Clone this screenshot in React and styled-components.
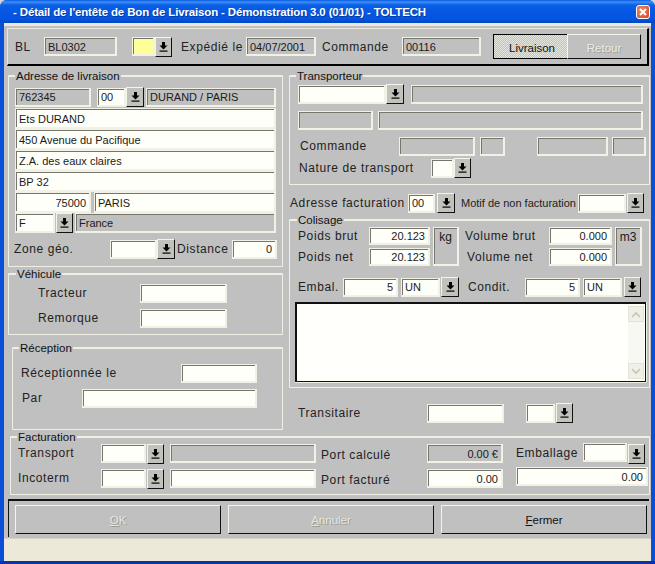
import React from 'react'
import styled, { createGlobalStyle, css } from 'styled-components'

const GlobalStyle = createGlobalStyle`
  html, body {
    margin: 0;
    padding: 0;
    background: #d4d4d4;
  }
  body {
    font-family: "Liberation Sans", Arial, sans-serif;
    color: #111;
  }
  * { box-sizing: border-box; }
`

const Win = styled.div`
  width: 655px;
  height: 564px;
  display: flex;
  flex-direction: column;
  overflow: hidden;
  border-radius: 7px 7px 0 0;
  background: #0a4fd8;
  border-bottom: 3px solid #0733a8;
`

const TitleBar = styled.div`
  height: 23px;
  flex: none;
  display: flex;
  align-items: center;
  justify-content: space-between;
  padding: 0 5px 0 13px;
  background: linear-gradient(180deg, #0a5ae6 0, #3d8ff2 2px, #0a5fe8 5px, #0355e2 14px, #0355e2 19px, #0246c4 23px);
  color: #fff;
  font-size: 11.5px;
  font-weight: 700;
  letter-spacing: -0.15px;
  text-shadow: 1px 1px 0 #0a3a9a;
  white-space: nowrap;
`

const CloseBtn = styled.div`
  width: 14px;
  height: 14px;
  border: 1px solid #fff;
  border-radius: 3px;
  background: radial-gradient(circle at 35% 35%, #ee8a68, #d8431f);
  display: flex;
  align-items: center;
  justify-content: center;
`

const Frame = styled.div`
  flex: 1;
  display: flex;
  flex-direction: column;
  margin: 0 4px 0 4px;
  border-top: 3px solid #ece9d8;
  background: #c0c0c0;
`

const TopPanel = styled.div`
  height: 38px;
  margin: 2px 0 0 3px;
  width: 642px;
  padding-left: 7px;
  display: flex;
  align-items: center;
  border-top: 1px solid #e8e8dc;
  border-left: 1px solid #e8e8dc;
  border-right: 2px solid #000;
  border-bottom: 2px solid #000;
`

const Middle = styled.div`
  display: flex;
  height: 361px;
  margin-top: 3px;
`

const LeftCol = styled.div`
  width: 281px;
  flex: none;
  display: flex;
  flex-direction: column;
  margin-left: 4px;
`

const RightCol = styled.div`
  width: 361px;
  flex: none;
  display: flex;
  flex-direction: column;
`

const Group = styled.fieldset`
  margin: ${p => p.$mt || 0}px 0 0 ${p => p.$ml || 0}px;
  padding: ${p => p.$pad || '0 0 0 6px'};
  width: ${p => p.$w}px;
  height: ${p => p.$h}px;
  flex: none;
  min-width: 0;
  border: 1px solid #efefe4;
  border-top-width: 2px;
  border-radius: 1px;
  display: block;
`

const Legend = styled.legend`
  margin-left: ${p => p.$ml || 0}px;
  padding: 0 1px;
  font-size: 11.5px;
  line-height: 14px;
  height: 14px;
  color: #111;
`

const Row = styled.div`
  display: flex;
  align-items: ${p => p.$top ? 'flex-start' : 'center'};
  height: ${p => p.$h || 20}px;
  margin-top: ${p => p.$mt || 0}px;
  margin-left: ${p => p.$ml || 0}px;
`

const Label = styled.div`
  flex: none;
  width: ${p => p.$w}px;
  margin-left: ${p => p.$ml || 0}px;
  margin-top: ${p => p.$mt || 0}px;
  font-size: ${p => p.$small ? 11 : 12}px;
  letter-spacing: ${p => p.$small ? 0 : 0.6}px;
  white-space: nowrap;
  color: #222;
`

const tones = {
  grey: '#c0c0c0',
  white: '#fffffa',
  yellow: '#ffff99',
}

const Field = styled.div`
  flex: none;
  width: ${p => p.$w}px;
  height: ${p => p.$h || 19}px;
  margin-left: ${p => p.$ml || 0}px;
  margin-top: ${p => p.$mt || 0}px;
  padding: 1px 3px 0 3px;
  display: flex;
  align-items: center;
  justify-content: ${p => p.$right ? 'flex-end' : 'flex-start'};
  background: ${p => tones[p.$tone || 'grey']};
  border-style: solid;
  border-color: #f1f1e6;
  border-width: 1px 2px 2px 1px;
  box-shadow: inset 1px 1px 0 #76766a;
  font-size: 11px;
  white-space: nowrap;
  overflow: hidden;
  color: #1a1a1a;
`

const Unit = styled(Field)`
  height: 39px;
  align-items: flex-start;
  justify-content: center;
  padding-top: 2px;
  font-size: 12px;
`

const DropBtn = styled.div`
  flex: none;
  width: ${p => p.$w || 17}px;
  height: 20px;
  margin-left: ${p => p.$ml || 0}px;
  display: flex;
  align-items: center;
  justify-content: center;
  background: #c2c2bc;
  border-style: solid;
  border-width: 1px;
  border-color: #f4f4ea #111 #111 #f4f4ea;
`

const Stack = styled.div`
  display: flex;
  flex-direction: column;
  gap: 3px;
`

const Memo = styled.div`
  width: 351px;
  height: 80px;
  margin-top: 5px;
  display: flex;
  justify-content: flex-end;
  background: #fffffc;
  border: 2px solid #111;
  border-right-width: 1px;
  border-bottom-width: 1px;
  box-shadow: 0 1px 0 #efefe4, 1px 0 0 #efefe4;
`

const ScrollTrack = styled.div`
  width: 16px;
  margin: 2px 1px 2px 0;
  display: flex;
  flex-direction: column;
  justify-content: space-between;
  background: #f8f8f2;
`

const ScrollArrow = styled.div`
  height: 16px;
  display: flex;
  align-items: center;
  justify-content: center;
  background: #f0f0e6;
  border: 1px solid #e2e2d6;
`

const Segmented = styled.div`
  width: 148px;
  height: 25px;
  margin-left: 12px;
  display: flex;
`

const SegOn = styled.div`
  width: 74px;
  display: flex;
  align-items: center;
  justify-content: center;
  padding: 2px 0 0 3px;
  border: 1px solid #000;
  border-width: 1px 0 1px 1px;
  font-size: 11.5px;
  background: repeating-conic-gradient(#e6e6e0 0 25%, #c0c0c0 0 50%) 0 0 / 2px 2px;
`

const SegOff = styled.div`
  width: 74px;
  display: flex;
  align-items: center;
  justify-content: center;
  padding-top: 2px;
  border-style: solid;
  border-width: 1px;
  border-color: #f4f4ea #111 #111 #f4f4ea;
  font-size: 11.5px;
  color: #ecece4;
  text-shadow: 1px 1px 0 #a0a09a;
`

const BottomPanel = styled.div`
  width: 641px;
  height: 38px;
  margin: 4px 0 0 4px;
  padding: 4px 0 0 6px;
  display: flex;
  gap: 7px;
  border-top: 2px solid #111;
  border-left: 1px solid #111;
`

const disabledText = css`
  color: #e6e6de;
  text-shadow: 1px 1px 0 #9c9c96;
`

const CmdButton = styled.div`
  width: 206px;
  height: 29px;
  display: flex;
  align-items: center;
  justify-content: center;
  border-style: solid;
  border-width: 1px;
  border-color: #f4f4ea #111 #111 #f4f4ea;
  font-size: 11.5px;
  ${p => p.$disabled && disabledText}
`

const StatusBar = styled.div`
  flex: 1;
  margin-top: 1px;
  background: #ece9d8;
  border-top: 1px solid #d6d3c4;
`

const Arrow = () => (
  <svg width="9" height="10" viewBox="0 0 9 10">
    <path d="M3 0h3v3.5h2.5L4.5 7.5.5 3.5H3z" fill="#000" />
    <rect x="0.5" y="8.5" width="8" height="1.2" fill="#000" />
  </svg>
)

const Chevron = ({ up }) => (
  <svg width="10" height="7" viewBox="0 0 10 7">
    <path d={up ? 'M1 6l4-4 4 4' : 'M1 1l4 4 4-4'} fill="none" stroke="#c4c4ba" strokeWidth="1.6" />
  </svg>
)

export default function App() {
  return (
    <>
      <GlobalStyle />
      <Win>
        <TitleBar>
          <span>- Détail de l'entête de Bon de Livraison - Démonstration 3.0 (01/01) - TOLTECH</span>
          <CloseBtn>
            <svg width="8" height="8" viewBox="0 0 8 8">
              <path d="M1 1l6 6M7 1L1 7" stroke="#fff" strokeWidth="2" />
            </svg>
          </CloseBtn>
        </TitleBar>
        <Frame>
          <TopPanel>
            <Label $w={29}>BL</Label>
            <Field $w={73}>BL0302</Field>
            <Field $w={23} $ml={15} $tone="yellow" />
            <DropBtn><Arrow /></DropBtn>
            <Label $w={65} $ml={9}>Expédié le</Label>
            <Field $w={70}>04/07/2001</Field>
            <Label $w={80} $ml={6}>Commande</Label>
            <Field $w={79}>00116</Field>
            <Segmented>
              <SegOn>Livraison</SegOn>
              <SegOff>Retour</SegOff>
            </Segmented>
          </TopPanel>

          <Middle>
            <LeftCol>
              <Group $w={275} $h={198}>
                <Legend>Adresse de livraison</Legend>
                <Row $mt={4}>
                  <Field $w={76}>762345</Field>
                  <Field $w={29} $ml={6} $tone="white">00</Field>
                  <DropBtn $w={18}><Arrow /></DropBtn>
                  <Field $w={130} $ml={2}>DURAND / PARIS</Field>
                </Row>
                <Row $h={21} $mt={1}><Field $w={261} $h={21} $tone="white">Ets DURAND</Field></Row>
                <Row $h={21}><Field $w={261} $h={21} $tone="white">450 Avenue du Pacifique</Field></Row>
                <Row $h={21}><Field $w={261} $h={21} $tone="white">Z.A. des eaux claires</Field></Row>
                <Row $h={21}><Field $w={261} $h={21} $tone="white">BP 32</Field></Row>
                <Row $h={21}>
                  <Field $w={76} $h={21} $tone="white" $right>75000</Field>
                  <Field $w={182} $h={21} $ml={3} $tone="white">PARIS</Field>
                </Row>
                <Row>
                  <Field $w={40} $h={20} $tone="white">F</Field>
                  <DropBtn $ml={1}><Arrow /></DropBtn>
                  <Field $w={201} $h={20} $ml={2}>France</Field>
                </Row>
                <Row $mt={6} $ml={-1}>
                  <Label $w={96}>Zone géo.</Label>
                  <Field $w={47} $tone="white" />
                  <DropBtn $w={18}><Arrow /></DropBtn>
                  <Label $w={55} $ml={2}>Distance</Label>
                  <Field $w={45} $tone="white" $right>0</Field>
                </Row>
              </Group>

              <Group $w={275} $h={68} $pad="0 0 0 29px">
                <Legend $ml={-22}>Véhicule</Legend>
                <Row $mt={2}>
                  <Label $w={102}>Tracteur</Label>
                  <Field $w={87} $tone="white" />
                </Row>
                <Row $mt={5}>
                  <Label $w={102}>Remorque</Label>
                  <Field $w={87} $tone="white" />
                </Row>
              </Group>

              <Group $w={271} $h={89} $mt={6} $ml={4} $pad="0 0 0 8px">
                <Legend $ml={-2}>Réception</Legend>
                <Row $mt={8}>
                  <Label $w={160}>Réceptionnée le</Label>
                  <Field $w={76} $tone="white" />
                </Row>
                <Row $mt={5}>
                  <Label $w={60} $ml={1}>Par</Label>
                  <Field $w={175} $tone="white" />
                </Row>
              </Group>
            </LeftCol>

            <RightCol>
              <Group $w={361} $h={116} $pad="0 0 0 8px">
                <Legend $ml={-2}>Transporteur</Legend>
                <Row $mt={1}>
                  <Field $w={88} $tone="white" />
                  <DropBtn $w={18}><Arrow /></DropBtn>
                  <Field $w={232} $ml={7} />
                </Row>
                <Row $mt={7} $h={19}>
                  <Field $w={75} />
                  <Field $w={265} $ml={5} />
                </Row>
                <Row $mt={6}>
                  <Label $w={101} $ml={2}>Commande</Label>
                  <Field $w={76} $ml={-2} />
                  <Field $w={25} $ml={5} />
                  <Field $w={71} $ml={32} />
                  <Field $w={34} $ml={4} />
                </Row>
                <Row $mt={2}>
                  <Label $w={133} $ml={1}>Nature de transport</Label>
                  <Field $w={23} $ml={-1} $tone="white" />
                  <DropBtn><Arrow /></DropBtn>
                </Row>
              </Group>

              <Row $mt={8} $ml={1}>
                <Label $w={118}>Adresse facturation</Label>
                <Field $w={27} $tone="white">00</Field>
                <DropBtn $w={18} $ml={2}><Arrow /></DropBtn>
                <Label $w={117} $ml={6} $small>Motif de non facturation</Label>
                <Field $w={48} $tone="white" />
                <DropBtn $ml={1}><Arrow /></DropBtn>
              </Row>

              <Group $w={361} $h={175} $pad="0 0 0 5px">
                <Legend $ml={2}>Colisage</Legend>
                <Row $h={39} $top>
                  <Stack>
                    <Row $h={18} $ml={3}>
                      <Label $w={71}>Poids brut</Label>
                      <Field $w={61} $h={18} $tone="white" $right>20.123</Field>
                    </Row>
                    <Row $h={18} $ml={3}>
                      <Label $w={71}>Poids net</Label>
                      <Field $w={61} $h={18} $tone="white" $right>20.123</Field>
                    </Row>
                  </Stack>
                  <Unit $w={26} $ml={3}>kg</Unit>
                  <Stack>
                    <Row $h={18} $ml={6}>
                      <Label $w={84}>Volume brut</Label>
                      <Field $w={63} $h={18} $tone="white" $right>0.000</Field>
                    </Row>
                    <Row $h={18} $ml={6}>
                      <Label $w={82} $ml={2}>Volume net</Label>
                      <Field $w={63} $h={18} $tone="white" $right>0.000</Field>
                    </Row>
                  </Stack>
                  <Unit $w={27} $ml={3}>m3</Unit>
                </Row>
                <Row $mt={11} $ml={3}>
                  <Label $w={45}>Embal.</Label>
                  <Field $w={55} $tone="white" $right>5</Field>
                  <Field $w={39} $ml={3} $tone="white">UN</Field>
                  <DropBtn $w={18} $ml={1}><Arrow /></DropBtn>
                  <Label $w={57} $ml={9}>Condit.</Label>
                  <Field $w={55} $tone="white" $right>5</Field>
                  <Field $w={39} $ml={3} $tone="white">UN</Field>
                  <DropBtn $ml={2}><Arrow /></DropBtn>
                </Row>
                <Memo>
                  <ScrollTrack>
                    <ScrollArrow><Chevron up /></ScrollArrow>
                    <ScrollArrow><Chevron /></ScrollArrow>
                  </ScrollTrack>
                </Memo>
              </Group>

              <Row $mt={15} $ml={9}>
                <Label $w={129}>Transitaire</Label>
                <Field $w={77} $tone="white" />
                <Field $w={29} $ml={22} $tone="white" />
                <DropBtn $ml={1}><Arrow /></DropBtn>
              </Row>
            </RightCol>
          </Middle>

          <Group $w={640} $h={65} $ml={6} $pad="0 0 0 7px">
            <Legend $ml={-1}>Facturation</Legend>
            <Row $top>
              <Label $w={83} $mt={2}>Transport</Label>
              <Field $w={45} $tone="white" />
              <DropBtn $ml={1}><Arrow /></DropBtn>
              <Field $w={146} $ml={6} />
              <Label $w={106} $ml={5} $mt={4}>Port calculé</Label>
              <Field $w={76} $right>0.00 €</Field>
              <Label $w={67} $ml={13} $mt={2}>Emballage</Label>
              <Field $w={44} $mt={-1} $tone="white" />
              <DropBtn $ml={1}><Arrow /></DropBtn>
            </Row>
            <Row $top $mt={5}>
              <Label $w={83} $mt={2}>Incoterm</Label>
              <Field $w={45} $tone="white" />
              <DropBtn $ml={1}><Arrow /></DropBtn>
              <Field $w={146} $ml={6} $tone="white" />
              <Label $w={106} $ml={5} $mt={4}>Port facturé</Label>
              <Field $w={76} $tone="white" $right>0.00</Field>
              <Field $w={132} $ml={13} $mt={-2} $tone="white" $right>0.00</Field>
            </Row>
          </Group>

          <BottomPanel>
            <CmdButton $disabled><span><u>O</u>K</span></CmdButton>
            <CmdButton $disabled><span><u>A</u>nnuler</span></CmdButton>
            <CmdButton><span><u>F</u>ermer</span></CmdButton>
          </BottomPanel>

          <StatusBar />
        </Frame>
      </Win>
    </>
  )
}
